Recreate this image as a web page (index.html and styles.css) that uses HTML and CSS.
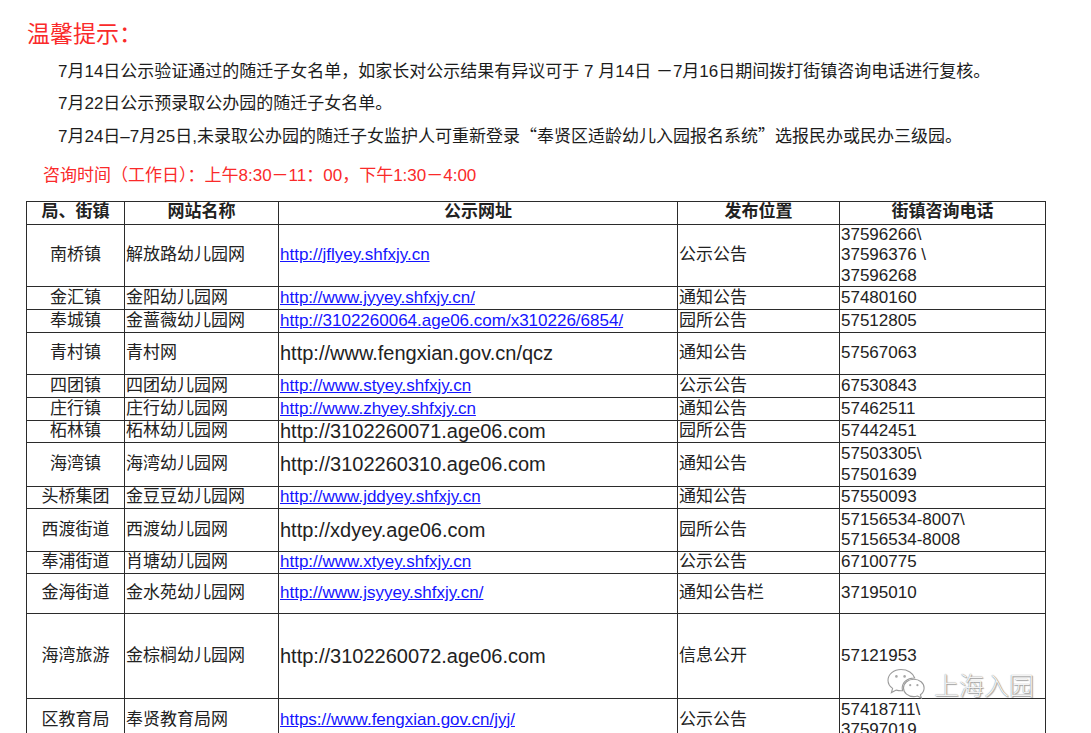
FILE: index.html
```html
<!DOCTYPE html>
<html lang="zh-CN">
<head>
<meta charset="utf-8">
<title>温馨提示</title>
<link rel="stylesheet" href="styles.css">
</head>
<body>
<div class="page">
  <h1 class="title">温馨提示：</h1>
  <div class="notes">
    <p>7月14日公示验证通过的随迁子女名单，如家长对公示结果有异议可于 7 月14日 －7月16日期间拨打街镇咨询电话进行复核。</p>
    <p>7月22日公示预录取公办园的随迁子女名单。</p>
    <p>7月24日–7月25日,未录取公办园的随迁子女监护人可重新登录<span class="q">“</span>奉贤区适龄幼儿入园报名系统<span class="q">”</span>选报民办或民办三级园。</p>
  </div>
  <p class="hours">咨询时间（工作日）：上午8:30－11：00，下午1:30－4:00</p>
  <div class="table-wrap">
    <table class="list">
      <colgroup>
        <col class="c-town">
        <col class="c-site">
        <col class="c-url">
        <col class="c-pos">
        <col class="c-tel">
      </colgroup>
      <thead>
        <tr class="h23">
          <th>局、街镇</th><th>网站名称</th><th>公示网址</th><th>发布位置</th><th>街镇咨询电话</th>
        </tr>
      </thead>
      <tbody>
        <tr class="h63">
          <td class="town">南桥镇</td><td>解放路幼儿园网</td><td><a href="#">http://jflyey.shfxjy.cn</a></td><td>公示公告</td><td>37596266\<br>37596376 \<br>37596268</td>
        </tr>
        <tr class="h23">
          <td class="town">金汇镇</td><td>金阳幼儿园网</td><td><a href="#">http://www.jyyey.shfxjy.cn/</a></td><td>通知公告</td><td>57480160</td>
        </tr>
        <tr class="h23">
          <td class="town">奉城镇</td><td>金蔷薇幼儿园网</td><td><a href="#">http://3102260064.age06.com/x310226/6854/</a></td><td>园所公告</td><td>57512805</td>
        </tr>
        <tr class="h42">
          <td class="town">青村镇</td><td>青村网</td><td class="plain">http://www.fengxian.gov.cn/qcz</td><td>通知公告</td><td>57567063</td>
        </tr>
        <tr class="h23">
          <td class="town">四团镇</td><td>四团幼儿园网</td><td><a href="#">http://www.styey.shfxjy.cn</a></td><td>公示公告</td><td>67530843</td>
        </tr>
        <tr class="h23">
          <td class="town">庄行镇</td><td>庄行幼儿园网</td><td><a href="#">http://www.zhyey.shfxjy.cn</a></td><td>通知公告</td><td>57462511</td>
        </tr>
        <tr class="h22">
          <td class="town">柘林镇</td><td>柘林幼儿园网</td><td class="plain">http://3102260071.age06.com</td><td>园所公告</td><td>57442451</td>
        </tr>
        <tr class="h44">
          <td class="town">海湾镇</td><td>海湾幼儿园网</td><td class="plain">http://3102260310.age06.com</td><td>通知公告</td><td>57503305\<br>57501639</td>
        </tr>
        <tr class="h22">
          <td class="town">头桥集团</td><td>金豆豆幼儿园网</td><td><a href="#">http://www.jddyey.shfxjy.cn</a></td><td>通知公告</td><td>57550093</td>
        </tr>
        <tr class="h43">
          <td class="town">西渡街道</td><td>西渡幼儿园网</td><td class="plain">http://xdyey.age06.com</td><td>园所公告</td><td>57156534-8007\<br>57156534-8008</td>
        </tr>
        <tr class="h22">
          <td class="town">奉浦街道</td><td>肖塘幼儿园网</td><td><a href="#">http://www.xtyey.shfxjy.cn</a></td><td>公示公告</td><td>67100775</td>
        </tr>
        <tr class="h40">
          <td class="town">金海街道</td><td>金水苑幼儿园网</td><td><a href="#">http://www.jsyyey.shfxjy.cn/</a></td><td>通知公告栏</td><td>37195010</td>
        </tr>
        <tr class="h85">
          <td class="town">海湾旅游</td><td>金棕榈幼儿园网</td><td class="plain">http://3102260072.age06.com</td><td>信息公开</td><td>57121953</td>
        </tr>
        <tr class="h43">
          <td class="town">区教育局</td><td>奉贤教育局网</td><td><a href="#">https://www.fengxian.gov.cn/jyj/</a></td><td>公示公告</td><td>57418711\<br>37597019</td>
        </tr>
      </tbody>
    </table>
    <div class="watermark">
      <svg class="wm-icon" width="40" height="34" viewBox="0 0 40 34" aria-hidden="true">
        <path class="bubble" d="M15 2.5C7.8 2.5 2 7.3 2 13.2c0 3.3 1.8 6.2 4.6 8.2L5.4 25.6l4.8-2.5c1.5.4 3.1.7 4.8.7c.6 0 1.1 0 1.7-.1C16.3 22.6 16.2 21.8 16.2 21c0-5.6 5.2-10 11.6-10c.3 0 .6 0 .9 0C27.3 6.1 21.7 2.5 15 2.5z"/>
        <path class="bubble" d="M27.8 12.2c-5.7 0-10.3 3.9-10.3 8.7s4.6 8.7 10.3 8.7c1.3 0 2.5-.2 3.7-.6l3.9 2.1-1-3.4c2.3-1.6 3.7-4 3.7-6.8c0-4.8-4.6-8.7-10.3-8.7z"/>
        <circle class="dot" cx="10.4" cy="9.4" r="1.3"/>
        <circle class="dot" cx="18.6" cy="9.4" r="1.3"/>
        <circle class="dot" cx="24.2" cy="18.2" r="1.1"/>
        <circle class="dot" cx="31.4" cy="18.2" r="1.1"/>
      </svg>
      <span class="wm-text">上海入园</span>
    </div>
  </div>
</div>
</body>
</html>
```

FILE: styles.css
```css
html, body {
  margin: 0;
  padding: 0;
  background: #ffffff;
}

body {
  color: #1c1c1c;
  font-family: "Liberation Sans", "Noto Sans CJK SC", sans-serif;
}

.page {
  padding: 19px 0 0 26px;
}

.title {
  margin: 0 0 0 1px;
  font-size: 23px;
  line-height: 30px;
  font-weight: normal;
  color: #fa2a2a;
}

.notes {
  margin: 7px 0 0 32px;
  font-size: 17px;
  line-height: 31.5px;
}

.notes p {
  margin: 0;
}

.notes .q {
  font-family: "Noto Sans CJK SC", sans-serif;
}

.hours {
  margin: 11px 0 0 17px;
  color: #fa2a2a;
  font-size: 17px;
  line-height: 24px;
}

.table-wrap {
  position: relative;
  width: 1020px;
  margin-top: 13px;
}

.list {
  border-collapse: collapse;
  table-layout: fixed;
  width: 1020px;
  font-size: 17px;
  line-height: 20.5px;
  color: #222;
}

.c-town { width: 98px; }
.c-site { width: 154px; }
.c-url  { width: 399px; }
.c-pos  { width: 162px; }
.c-tel  { width: 206px; }

.list th,
.list td {
  border: 1px solid #2b2b2b;
  padding: 0 1px;
  vertical-align: middle;
  text-align: left;
  white-space: nowrap;
  overflow: hidden;
}

.list th {
  text-align: center;
  font-weight: bold;
}

.list td.town {
  text-align: center;
}

.list td.plain {
  font-size: 20px;
}

.list a {
  color: #1414ff;
  text-decoration: underline;
  text-underline-offset: 1px;
}

.h22 { height: 22px; }
.h23 { height: 23px; }
.h40 { height: 40px; }
.h42 { height: 42px; }
.h43 { height: 43px; }
.h44 { height: 44px; }
.h63 { height: 62px; }
.h85 { height: 85px; }

.watermark {
  position: absolute;
  right: 12px;
  top: 466px;
  display: flex;
  align-items: center;
  gap: 8px;
  pointer-events: none;
}

.wm-icon .bubble {
  fill: rgba(255, 255, 255, 0.85);
  stroke: #9a9a9a;
  stroke-width: 1.1;
}

.wm-icon .dot {
  fill: #a8a8a8;
}

.wm-text {
  font-family: "Noto Sans CJK SC", sans-serif;
  font-size: 25px;
  line-height: 32px;
  font-weight: 300;
  color: rgba(255, 255, 255, 0.92);
  text-shadow: 0 0 1px #6f6f6f, 1px 1px 1px rgba(0, 0, 0, 0.35);
  letter-spacing: 0;
}
```
